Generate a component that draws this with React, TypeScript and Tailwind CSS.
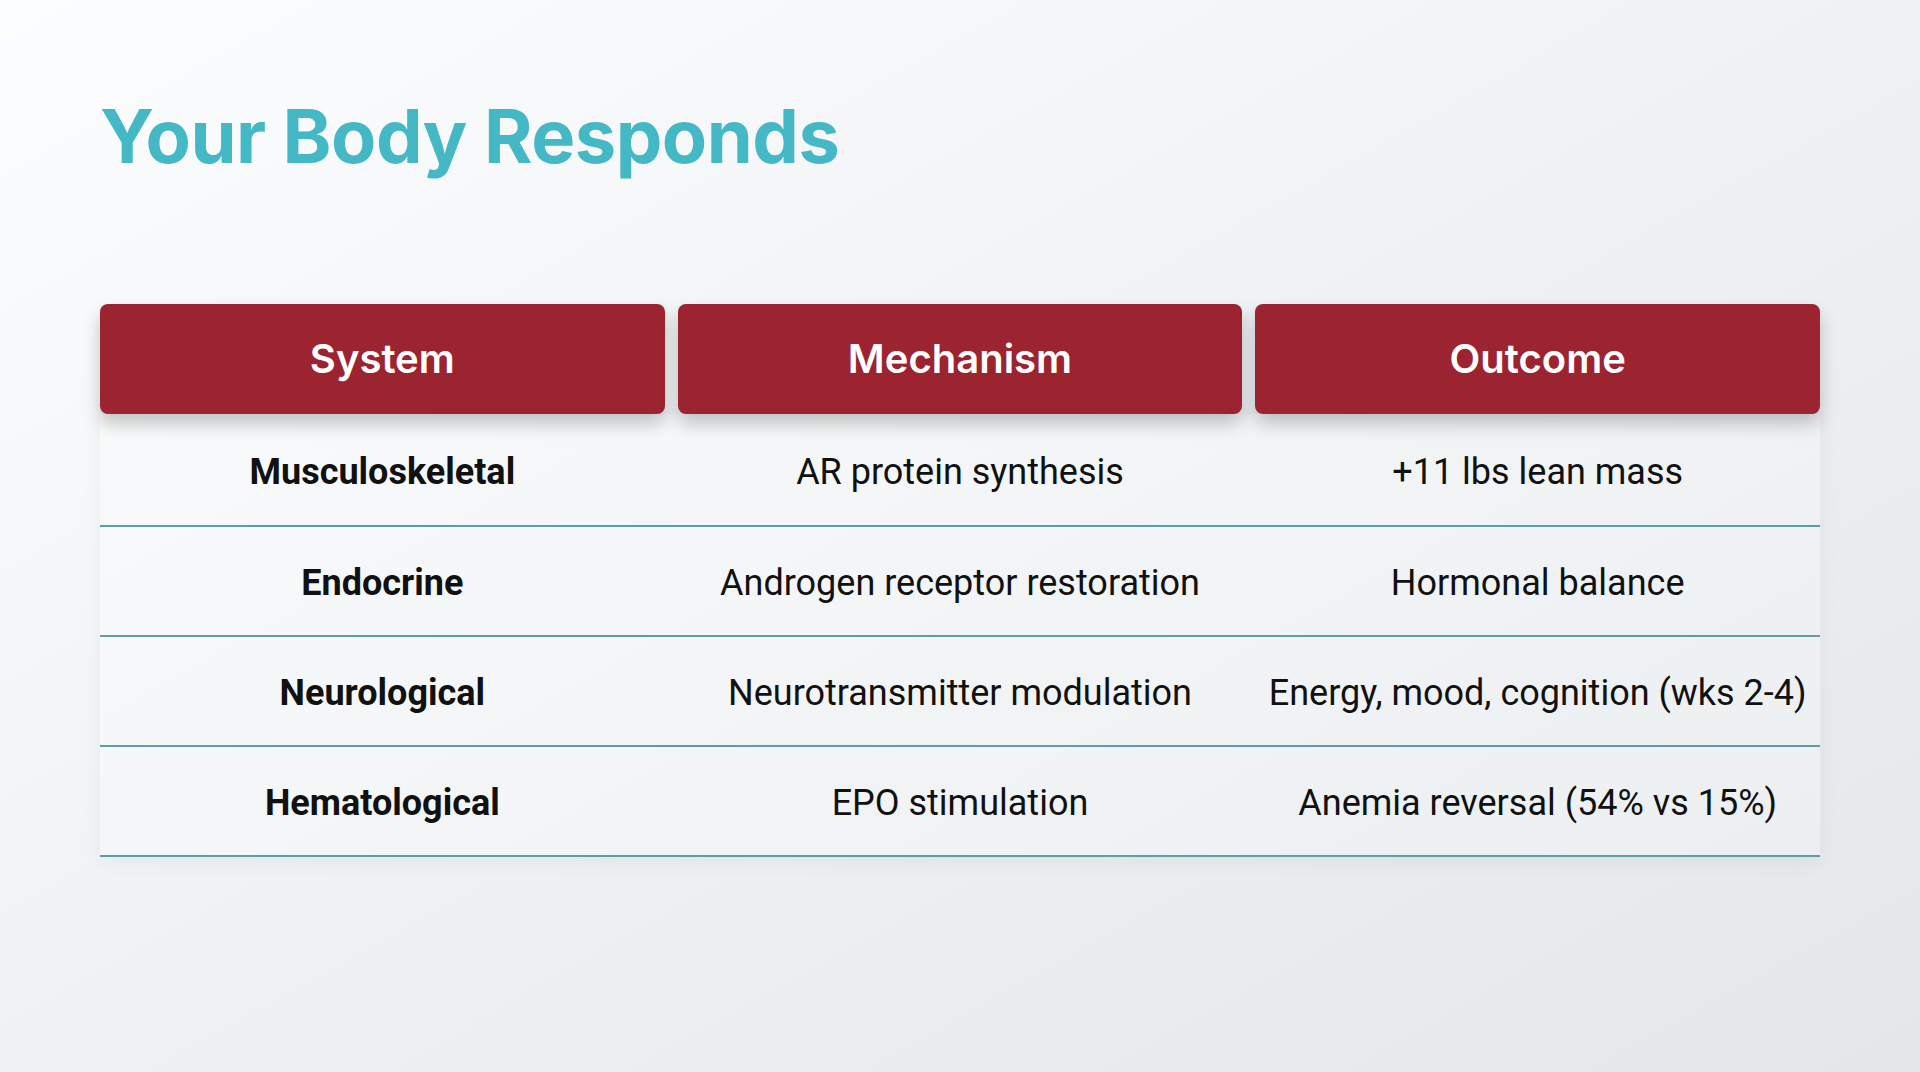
const rows = [
  { system: "Musculoskeletal", mechanism: "AR protein synthesis", outcome: "+11 lbs lean mass" },
  { system: "Endocrine", mechanism: "Androgen receptor restoration", outcome: "Hormonal balance" },
  { system: "Neurological", mechanism: "Neurotransmitter modulation", outcome: "Energy, mood, cognition (wks 2-4)" },
  { system: "Hematological", mechanism: "EPO stimulation", outcome: "Anemia reversal (54% vs 15%)" },
];

const headers = ["System", "Mechanism", "Outcome"];

export default function App() {
  return (
    <div
      className="w-full h-[1072px] overflow-hidden bg-gradient-to-br from-[#fcfdfe] via-[#eff2f4] to-[#e3e7ea] text-[#111]"
      style={{ fontFamily: "Roboto, 'Liberation Sans', sans-serif" }}
    >
      <div className="px-[100px] pt-[88px]">
        {/* Title */}
        <h1
          className="text-[74px] leading-[96px] font-bold tracking-[-0.5px] text-[#45b8c5]"
          style={{ fontFamily: "Inter, 'Liberation Sans', sans-serif" }}
        >
          Your Body Responds
        </h1>

        {/* Table */}
        <div className="mt-[120px]">
          <div className="grid grid-cols-3 gap-[13px]">
            {headers.map((h) => (
              <div
                key={h}
                className="h-[110px] flex items-center justify-center rounded-[8px] bg-[#9c2431] text-white text-[40px] font-semibold shadow-[0_10px_18px_rgba(0,0,0,0.22)]"
                style={{ fontFamily: "Inter, 'Liberation Sans', sans-serif" }}
              >
                {h}
              </div>
            ))}
          </div>

          <div className="bg-white/25 shadow-[0_6px_20px_rgba(0,0,0,0.05)]">
            {rows.map((r, i) => (
              <div
                key={r.system}
                className={`grid grid-cols-3 gap-[13px] pt-[4px] border-b-2 border-[#5c9ea3] ${i === 0 ? "h-[113px]" : "h-[110px]"}`}
              >
                <div className="flex items-center justify-center text-[36px] font-bold">
                  {r.system}
                </div>
                <div className="flex items-center justify-center text-[36px]">
                  {r.mechanism}
                </div>
                <div className="flex items-center justify-center text-[36px] whitespace-nowrap">
                  {r.outcome}
                </div>
              </div>
            ))}
          </div>
        </div>
      </div>
    </div>
  );
}
